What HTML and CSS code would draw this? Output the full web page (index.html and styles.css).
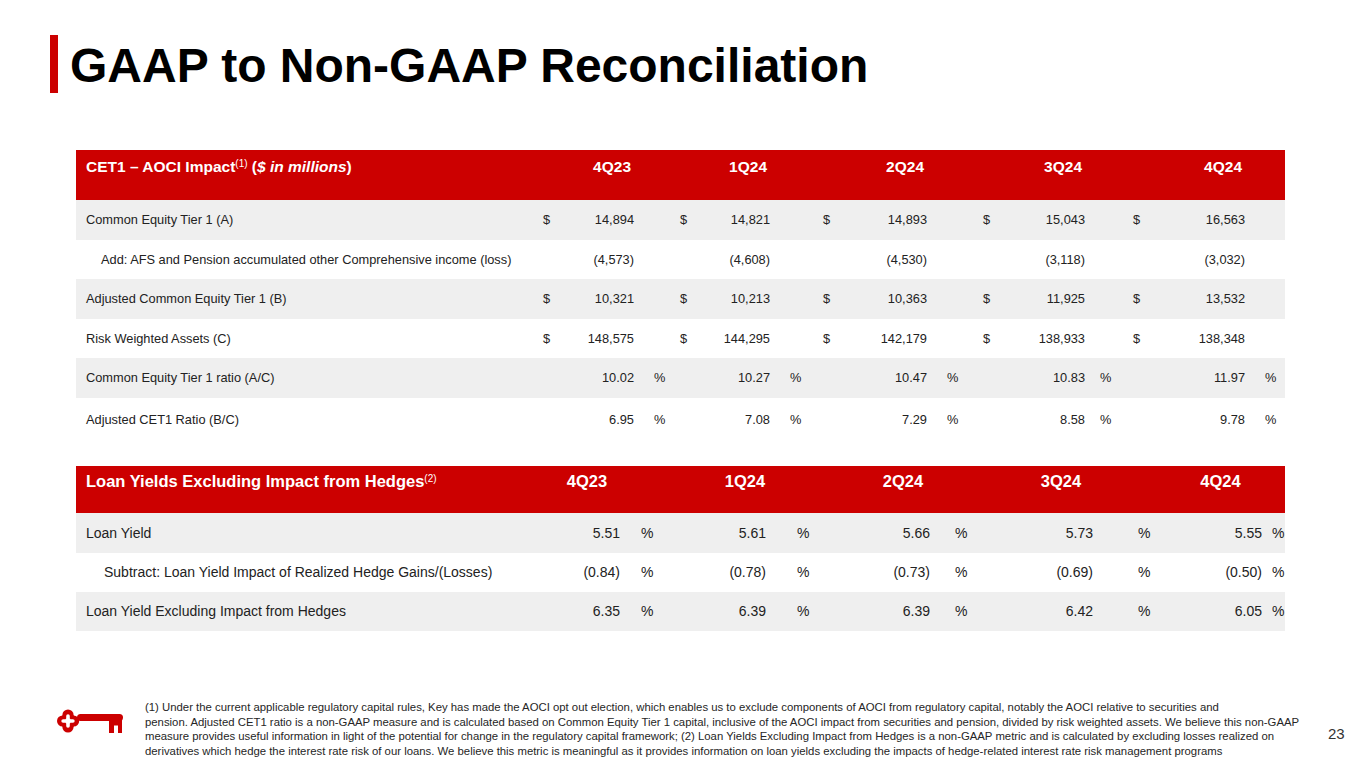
FILE: index.html
```html
<!DOCTYPE html>
<html lang="en">
<head>
<meta charset="utf-8">
<title>GAAP to Non-GAAP Reconciliation</title>
<link rel="stylesheet" href="styles.css">
</head>
<body>
<div class="slide">
  <header class="title-bar">
    <span class="accent"></span>
    <h1 class="title">GAAP to Non-GAAP Reconciliation</h1>
  </header>

  <section class="tbl t1">
    <div class="row head">
      <span class="label">CET1 – AOCI Impact<sup>(1)</sup> (<em>$ in millions</em>)</span>
      <span></span><span class="val">4Q23</span><span></span>
      <span></span><span class="val">1Q24</span><span></span>
      <span></span><span class="val">2Q24</span><span></span>
      <span></span><span class="val">3Q24</span><span></span>
      <span></span><span class="val">4Q24</span><span></span>
    </div>
    <div class="row shade">
      <span class="label">Common Equity Tier 1 (A)</span>
      <span class="cur">$</span><span class="val">14,894</span><span class="pct"></span>
      <span class="cur">$</span><span class="val">14,821</span><span class="pct"></span>
      <span class="cur">$</span><span class="val">14,893</span><span class="pct"></span>
      <span class="cur">$</span><span class="val">15,043</span><span class="pct"></span>
      <span class="cur">$</span><span class="val">16,563</span><span class="pct"></span>
    </div>
    <div class="row">
      <span class="label indent">Add: AFS and Pension accumulated other Comprehensive income (loss)</span>
      <span class="cur"></span><span class="val">(4,573)</span><span class="pct"></span>
      <span class="cur"></span><span class="val">(4,608)</span><span class="pct"></span>
      <span class="cur"></span><span class="val">(4,530)</span><span class="pct"></span>
      <span class="cur"></span><span class="val">(3,118)</span><span class="pct"></span>
      <span class="cur"></span><span class="val">(3,032)</span><span class="pct"></span>
    </div>
    <div class="row shade">
      <span class="label">Adjusted Common Equity Tier 1 (B)</span>
      <span class="cur">$</span><span class="val">10,321</span><span class="pct"></span>
      <span class="cur">$</span><span class="val">10,213</span><span class="pct"></span>
      <span class="cur">$</span><span class="val">10,363</span><span class="pct"></span>
      <span class="cur">$</span><span class="val">11,925</span><span class="pct"></span>
      <span class="cur">$</span><span class="val">13,532</span><span class="pct"></span>
    </div>
    <div class="row">
      <span class="label">Risk Weighted Assets (C)</span>
      <span class="cur">$</span><span class="val">148,575</span><span class="pct"></span>
      <span class="cur">$</span><span class="val">144,295</span><span class="pct"></span>
      <span class="cur">$</span><span class="val">142,179</span><span class="pct"></span>
      <span class="cur">$</span><span class="val">138,933</span><span class="pct"></span>
      <span class="cur">$</span><span class="val">138,348</span><span class="pct"></span>
    </div>
    <div class="row shade">
      <span class="label">Common Equity Tier 1 ratio (A/C)</span>
      <span class="cur"></span><span class="val">10.02</span><span class="pct">%</span>
      <span class="cur"></span><span class="val">10.27</span><span class="pct">%</span>
      <span class="cur"></span><span class="val">10.47</span><span class="pct">%</span>
      <span class="cur"></span><span class="val">10.83</span><span class="pct">%</span>
      <span class="cur"></span><span class="val">11.97</span><span class="pct">%</span>
    </div>
    <div class="row last">
      <span class="label">Adjusted CET1 Ratio (B/C)</span>
      <span class="cur"></span><span class="val">6.95</span><span class="pct">%</span>
      <span class="cur"></span><span class="val">7.08</span><span class="pct">%</span>
      <span class="cur"></span><span class="val">7.29</span><span class="pct">%</span>
      <span class="cur"></span><span class="val">8.58</span><span class="pct">%</span>
      <span class="cur"></span><span class="val">9.78</span><span class="pct">%</span>
    </div>
  </section>

  <section class="tbl t2">
    <div class="row head">
      <span class="label">Loan Yields Excluding Impact from Hedges<sup>(2)</sup></span>
      <span class="q">4Q23</span>
      <span class="q">1Q24</span>
      <span class="q">2Q24</span>
      <span class="q">3Q24</span>
      <span class="q">4Q24</span>
    </div>
    <div class="row shade">
      <span class="label">Loan Yield</span>
      <span class="val">5.51</span><span class="pct">%</span>
      <span class="val">5.61</span><span class="pct">%</span>
      <span class="val">5.66</span><span class="pct">%</span>
      <span class="val">5.73</span><span class="pct">%</span>
      <span class="val">5.55</span><span class="pct">%</span>
    </div>
    <div class="row">
      <span class="label indent">Subtract: Loan Yield Impact of Realized Hedge Gains/(Losses)</span>
      <span class="val">(0.84)</span><span class="pct">%</span>
      <span class="val">(0.78)</span><span class="pct">%</span>
      <span class="val">(0.73)</span><span class="pct">%</span>
      <span class="val">(0.69)</span><span class="pct">%</span>
      <span class="val">(0.50)</span><span class="pct">%</span>
    </div>
    <div class="row shade">
      <span class="label">Loan Yield Excluding Impact from Hedges</span>
      <span class="val">6.35</span><span class="pct">%</span>
      <span class="val">6.39</span><span class="pct">%</span>
      <span class="val">6.39</span><span class="pct">%</span>
      <span class="val">6.42</span><span class="pct">%</span>
      <span class="val">6.05</span><span class="pct">%</span>
    </div>
  </section>

  <footer class="foot">
    <svg class="logo" viewBox="0 0 66 26" width="66" height="26" aria-label="Key logo">
      <g fill="#cc0000">
        <circle cx="11" cy="7" r="5.6"/>
        <circle cx="11" cy="19" r="5.6"/>
        <circle cx="5.6" cy="13" r="5.6"/>
        <circle cx="16.6" cy="13" r="5.6"/>
        <rect x="5.6" y="7" width="11" height="12"/>
        <rect x="20" y="6" width="46" height="7" rx="3.5"/>
        <path d="M52 12 H65 V25 H61 V17.5 H57 V25 H52 Z"/>
      </g>
      <g fill="#ffffff">
        <rect x="9.2" y="6.3" width="3.6" height="13.4" rx="1.8"/>
        <rect x="4.3" y="11.2" width="13.4" height="3.6" rx="1.8"/>
        <rect x="8.6" y="10.6" width="4.8" height="4.8" rx="1"/>
      </g>
    </svg>
    <p class="notes">(1) Under the current applicable regulatory capital rules, Key has made the AOCI opt out election, which enables us to exclude components of AOCI from regulatory capital, notably the AOCI relative to securities and<br>pension. Adjusted CET1 ratio is a non-GAAP measure and is calculated based on Common Equity Tier 1 capital, inclusive of the AOCI impact from securities and pension, divided by risk weighted assets. We believe this non-GAAP<br>measure provides useful information in light of the potential for change in the regulatory capital framework; (2) Loan Yields Excluding Impact from Hedges is a non-GAAP metric and is calculated by excluding losses realized on<br>derivatives which hedge the interest rate risk of our loans. We believe this metric is meaningful as it provides information on loan yields excluding the impacts of hedge-related interest rate risk management programs</p>
    <span class="page">23</span>
  </footer>
</div>
</body>
</html>
```

FILE: styles.css
```css
* { box-sizing: border-box; }

html, body {
  margin: 0;
  padding: 0;
  background: #ffffff;
}

body {
  font-family: "Liberation Sans", Arial, sans-serif;
  color: #222222;
}

.slide {
  width: 1365px;
  height: 768px;
  position: relative;
  overflow: hidden;
}

/* Title */
.title-bar {
  display: flex;
  align-items: flex-start;
  gap: 12px;
  padding: 35px 0 0 50px;
}

.accent {
  width: 8px;
  height: 58px;
  background: #cc0000;
  flex: none;
}

.title {
  margin: 0;
  font-size: 48px;
  line-height: 62px;
  font-weight: 700;
  color: #000000;
}

/* Tables */
.tbl {
  margin-left: 76px;
  width: 1209px;
}

.t1 { margin-top: 53px; }
.t2 { margin-top: 24px; }

.row {
  display: grid;
  align-items: center;
  color: #222222;
}

.row.shade { background: #efefef; }

.t1 .row {
  grid-template-columns: 464px 20px 74px 43px 20px 73px 50px 20px 87px 53px 20px 85px 45px 20px 95px 40px;
  height: 39.5px;
  font-size: 12.8px;
}

.t1 .row.last { height: 44px; }

.t2 .row {
  grid-template-columns: 464px 80px 60px 86px 74px 90px 70px 93px 67px 102px 23px;
  height: 39px;
  font-size: 14px;
}

.t2 .row.shade:nth-child(2) { height: 40px; }

.row.head {
  background: #cc0000;
  color: #ffffff;
  font-weight: 700;
  align-items: start;
}

.t1 .row.head {
  height: 50px;
  font-size: 15.5px;
  padding-top: 8px;
}

.t2 .row.head {
  grid-template-columns: 432px 158px 158px 158px 158px 145px;
  height: 47px;
  font-size: 16.5px;
  padding-top: 6px;
}

.row.head sup {
  font-size: 10px;
  font-weight: 400;
  vertical-align: 5px;
  line-height: 0;
}

.row.head em { font-style: italic; }

.label {
  padding-left: 10px;
  white-space: nowrap;
}

.t1 .label.indent { padding-left: 25px; }
.t2 .label.indent { padding-left: 28px; }

.cur { padding-left: 3px; }

.val {
  text-align: right;
  white-space: nowrap;
}

.t1 .row.head .val { padding-right: 3px; }

.pct { padding-left: 20px; }
.t1 .pct:nth-child(13) { padding-left: 15px; }

.t2 .pct { padding-left: 21px; }
.t2 .pct:nth-child(5) { padding-left: 31px; }
.t2 .pct:nth-child(7) { padding-left: 25px; }
.t2 .pct:nth-child(9) { padding-left: 45px; }
.t2 .pct:nth-child(11) { padding-left: 10px; }

.q { text-align: center; }
.q:last-child { padding-left: 16px; }

/* Footer */
.foot {
  position: absolute;
  left: 0;
  right: 0;
  top: 700px;
  display: flex;
  align-items: flex-start;
}

.logo {
  flex: none;
  margin: 8px 0 0 57px;
}

.notes {
  margin: 0 0 0 22px;
  font-size: 11.35px;
  line-height: 14.5px;
  color: #262626;
  white-space: nowrap;
}

.page {
  position: absolute;
  left: 1328px;
  top: 25px;
  font-size: 15px;
  color: #333333;
}
```
